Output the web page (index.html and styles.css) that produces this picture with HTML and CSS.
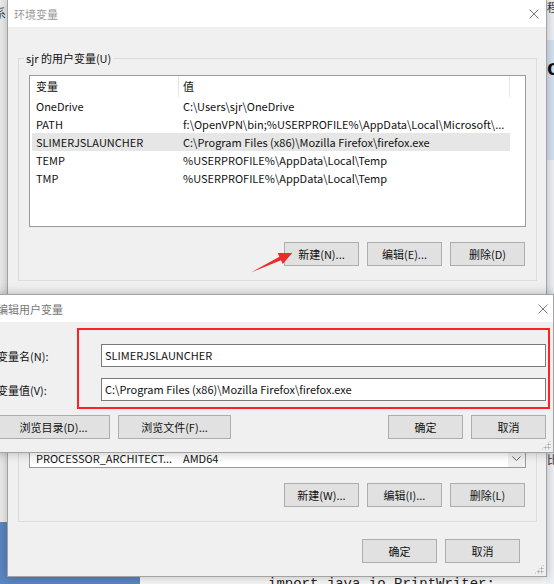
FILE: index.html
```html
<!DOCTYPE html>
<html lang="zh-CN">
<head>
    <meta charset="UTF-8">
    <title>环境变量</title>
    <link rel="stylesheet" href="styles.css">
</head>
<body>
    <!-- 背景里露出来的其他窗口 -->
    <div class="bg-left"><span class="bg-char">系</span></div>
    <div class="bg-taskbar"></div>
    <div class="bg-right">
        <span class="bg-char">程</span>
        <span class="bg-band"></span>
        <span class="bg-big">o</span>
        <span class="bg-char bg-char-low">比</span>
    </div>
    <div class="bg-code">import java.io.PrintWriter;</div>

    <!-- 环境变量 -->
    <div class="dialog env-dialog">
        <div class="titlebar">
            <span class="title">环境变量</span>
            <svg class="close" width="10" height="10" viewBox="0 0 10 10"><path d="M0.5 0.5L9.5 9.5M9.5 0.5L0.5 9.5" stroke="#7a7a7a" stroke-width="1" fill="none"/></svg>
        </div>
        <div class="env-body">
            <fieldset class="group">
                <legend>sjr 的用户变量(U)</legend>
                <div class="list">
                    <div class="list-head">
                        <span class="col-name">变量</span>
                        <span class="col-value">值</span>
                    </div>
                    <div class="list-row"><span class="col-name">OneDrive</span><span class="col-value">C:\Users\sjr\OneDrive</span></div>
                    <div class="list-row"><span class="col-name">PATH</span><span class="col-value">f:\OpenVPN\bin;%USERPROFILE%\AppData\Local\Microsoft\...</span></div>
                    <div class="list-row selected"><span class="col-name">SLIMERJSLAUNCHER</span><span class="col-value">C:\Program Files (x86)\Mozilla Firefox\firefox.exe</span></div>
                    <div class="list-row"><span class="col-name">TEMP</span><span class="col-value">%USERPROFILE%\AppData\Local\Temp</span></div>
                    <div class="list-row"><span class="col-name">TMP</span><span class="col-value">%USERPROFILE%\AppData\Local\Temp</span></div>
                </div>
                <div class="btn-row">
                    <button class="btn">新建(N)...</button>
                    <button class="btn">编辑(E)...</button>
                    <button class="btn">删除(D)</button>
                </div>
            </fieldset>

            <fieldset class="group group-system">
                <legend>系统变量(S)</legend>
                <div class="list list-system">
                    <div class="list-main">
                        <div class="list-head">
                            <span class="col-name">变量</span>
                            <span class="col-value">值</span>
                        </div>
                        <div class="rows">
                            <div class="list-row"><span class="col-name">ComSpec</span><span class="col-value">C:\WINDOWS\system32\cmd.exe</span></div>
                            <div class="list-row"><span class="col-name">DriverData</span><span class="col-value">C:\Windows\System32\Drivers\DriverData</span></div>
                            <div class="list-row"><span class="col-name">NUMBER_OF_PROCESSORS</span><span class="col-value">4</span></div>
                            <div class="list-row"><span class="col-name">OS</span><span class="col-value">Windows_NT</span></div>
                            <div class="list-row"><span class="col-name">Path</span><span class="col-value">C:\ProgramData\Oracle\Java\javapath;C:\WINDOWS\system32;...</span></div>
                            <div class="list-row"><span class="col-name">PATHEXT</span><span class="col-value">.COM;.EXE;.BAT;.CMD;.VBS;.VBE;.JS;.JSE;.WSF;.WSH;.MSC</span></div>
                            <div class="list-row"><span class="col-name">PROCESSOR_ARCHITECT...</span><span class="col-value">AMD64</span></div>
                        </div>
                    </div>
                    <div class="scrollbar">
                        <div class="scroll-down">
                            <svg width="9" height="5" viewBox="0 0 9 5"><path d="M0.5 0.5L4.5 4.5L8.5 0.5" stroke="#606060" fill="none"/></svg>
                        </div>
                    </div>
                </div>
                <div class="btn-row">
                    <button class="btn">新建(W)...</button>
                    <button class="btn">编辑(I)...</button>
                    <button class="btn">删除(L)</button>
                </div>
            </fieldset>

            <div class="btn-row dialog-actions">
                <button class="btn">确定</button>
                <button class="btn">取消</button>
            </div>
        </div>
        <span class="grip"></span>
    </div>

    <!-- 红色箭头 -->
    <svg class="arrow" width="60" height="40" viewBox="240 240 60 40">
        <path d="M251 272.5L279.4 256.7L277.7 253.1L292.3 253L282.7 263.9L281 260.3Z" fill="#ee2b2b"/>
    </svg>

    <!-- 编辑用户变量 -->
    <div class="dialog edit-dialog">
        <div class="titlebar">
            <span class="title">编辑用户变量</span>
            <svg class="close" width="10" height="10" viewBox="0 0 10 10"><path d="M0.5 0.5L9.5 9.5M9.5 0.5L0.5 9.5" stroke="#7a7a7a" stroke-width="1" fill="none"/></svg>
        </div>
        <div class="edit-body">
            <div class="field-grid">
                <label>变量名(N):</label>
                <div class="input">SLIMERJSLAUNCHER</div>
                <label>变量值(V):</label>
                <div class="input">C:\Program Files (x86)\Mozilla Firefox\firefox.exe</div>
            </div>
            <div class="edit-actions">
                <button class="btn btn-wide">浏览目录(D)...</button>
                <button class="btn btn-wide">浏览文件(F)...</button>
                <span class="spacer"></span>
                <button class="btn">确定</button>
                <button class="btn">取消</button>
            </div>
        </div>
        <span class="grip"></span>
    </div>

    <div class="highlight"></div>
</body>
</html>
```

FILE: styles.css
```css
* {
    box-sizing: border-box;
}
body {
    margin: 0;
    width: 554px;
    height: 584px;
    position: relative;
    overflow: hidden;
    background: #f7f7f7;
    font-family: "Noto Sans CJK SC", sans-serif;
    font-size: 11px;
    color: #111;
}

/* 背景 */
.bg-left {
    position: absolute;
    left: 0;
    top: 0;
    width: 7px;
    height: 522px;
    background: #ececec;
    overflow: hidden;
}
.bg-left .bg-char {
    position: absolute;
    left: -6px;
    top: 5px;
    color: #444;
    font-size: 12px;
    line-height: 16px;
}
.bg-taskbar {
    position: absolute;
    left: 0;
    top: 522px;
    width: 140px;
    height: 62px;
    background: #5b86c2;
}
.bg-right {
    position: absolute;
    left: 546px;
    top: 0;
    width: 8px;
    height: 584px;
    background: #eef1f5;
    overflow: hidden;
}
.bg-right .bg-char {
    position: absolute;
    left: 1px;
    top: 0;
    color: #333;
    font-size: 11px;
    line-height: 14px;
}
.bg-right .bg-char-low {
    top: 452px;
}
.bg-band {
    position: absolute;
    left: 0;
    top: 40px;
    width: 8px;
    height: 120px;
    background: #d5e2f1;
}
.bg-big {
    position: absolute;
    left: 1px;
    top: 54px;
    font-family: "Liberation Sans", sans-serif;
    font-weight: bold;
    font-size: 22px;
    line-height: 28px;
    color: #111;
}
.bg-code {
    position: absolute;
    left: 268px;
    top: 577px;
    font-family: "Liberation Mono", monospace;
    font-size: 14px;
    line-height: 14px;
    color: #222;
}

/* 对话框 */
.dialog {
    position: absolute;
    display: flex;
    flex-direction: column;
    background: #f0f0f0;
    border: 1px solid #a3a3a3;
    box-shadow: 0 0 10px rgba(0, 0, 0, 0.25);
}
.titlebar {
    flex: none;
    height: 27px;
    background: #fff;
    display: flex;
    align-items: center;
    justify-content: space-between;
    padding: 0 7px 0 6px;
}
.title {
    color: #999;
    line-height: 16px;
}
.grip {
    position: absolute;
    right: 2px;
    bottom: 2px;
    width: 10px;
    height: 10px;
    background: radial-gradient(circle, #a0a0a0 0.8px, transparent 1.2px) 0 0 / 3px 3px;
    clip-path: polygon(100% 0, 100% 100%, 0 100%);
}

.env-dialog {
    left: 7px;
    top: -1px;
    width: 540px;
    height: 578px;
}
.env-body {
    flex: 1;
    display: flex;
    flex-direction: column;
    padding: 0 9px 0 10px;
}

.group {
    margin: 23px 0 0;
    padding: 9px 10px 14px;
    border: 1px solid #dcdcdc;
    min-width: 0;
}
.group legend {
    padding: 0 2px;
    margin-left: -5px;
    line-height: 16px;
}
.group-system {
    margin-top: 10px;
}

/* 列表 */
.list {
    height: 152px;
    border: 1px solid #9a9a9a;
    background: #fff;
    display: flex;
    flex-direction: column;
}
.list-head {
    flex: none;
    display: flex;
    width: 480px;
    height: 21px;
    line-height: 21px;
}
.list-head .col-name {
    width: 149px;
    padding-left: 6px;
    border-right: 1px solid #e5e5e5;
}
.list-head .col-value {
    flex: 1;
    padding-left: 4px;
    border-right: 1px solid #e5e5e5;
}
.list-row {
    flex: none;
    display: flex;
    width: 478px;
    height: 18px;
    line-height: 18px;
    margin-left: 2px;
    white-space: nowrap;
}
.list-row .col-name {
    width: 147px;
    padding-left: 4px;
    overflow: hidden;
}
.list-row .col-value {
    flex: 1;
    padding-left: 4px;
    overflow: hidden;
}
.list-row.selected {
    background: #e6e6e6;
}

.list-system {
    flex-direction: row;
}
.list-main {
    flex: 1;
    display: flex;
    flex-direction: column;
    overflow: hidden;
}
.list-main .rows {
    flex: 1;
    display: flex;
    flex-direction: column;
    justify-content: flex-end;
    overflow: hidden;
}
.scrollbar {
    width: 17px;
    background: #f0f0f0;
    display: flex;
    flex-direction: column;
    justify-content: flex-end;
}
.scroll-down {
    height: 17px;
    display: flex;
    align-items: center;
    justify-content: center;
}
.scroll-down svg {
    display: block;
}

/* 按钮 */
.btn-row {
    display: flex;
    justify-content: flex-end;
    gap: 8px;
    margin-top: 15px;
    padding-right: 1px;
}
.btn {
    width: 75px;
    height: 24px;
    padding: 0;
    background: #e1e1e1;
    border: 1px solid #adadad;
    font: inherit;
    color: #111;
    white-space: nowrap;
}
.btn-wide {
    width: 113px;
}
.dialog-actions {
    margin-top: 17px;
    padding-right: 17px;
}

/* 编辑用户变量 */
.edit-dialog {
    left: -12px;
    top: 294px;
    width: 566px;
    height: 159px;
}
.edit-dialog .titlebar {
    padding: 0 5px 0 8px;
}
.edit-dialog .title {
    color: #777;
}
.edit-body {
    padding: 22px 7px 0 8px;
}
.field-grid {
    display: grid;
    grid-template-columns: 104px 1fr;
    row-gap: 11px;
    align-items: center;
}
.field-grid label {
    line-height: 16px;
    white-space: nowrap;
}
.input {
    height: 23px;
    line-height: 21px;
    padding-left: 3px;
    background: #fff;
    border: 1px solid #7a7a7a;
    white-space: nowrap;
    overflow: hidden;
}
.edit-actions {
    display: flex;
    gap: 8px;
    margin-top: 14px;
}
.spacer {
    flex: 1;
}

/* 标注 */
.arrow {
    position: absolute;
    left: 240px;
    top: 240px;
}
.highlight {
    position: absolute;
    left: 77px;
    top: 328px;
    width: 473px;
    height: 81px;
    border: 2px solid #f22;
}
```
